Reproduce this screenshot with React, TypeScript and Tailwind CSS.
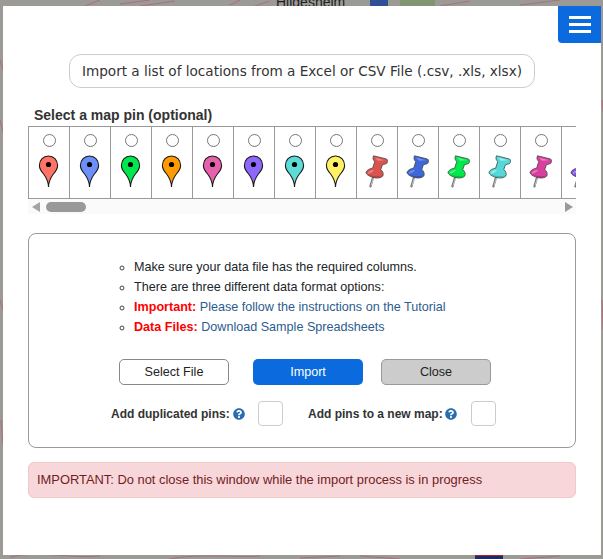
import { FaQuestionCircle } from "react-icons/fa";

const dropPins = ["#ff7466", "#6b90fb", "#00e64d", "#ff9a00", "#e661ac", "#8e67fd", "#5ddbd6", "#fff064"];
const pushPins = [
  ["#d9534f", "#ef8481", "#a33a38"],
  ["#3f67d8", "#6f92ee", "#2c479c"],
  ["#00e64d", "#55f58a", "#00a838"],
  ["#55d8d8", "#9aeeee", "#2ba3a5"],
  ["#d93f9f", "#f079c0", "#a02c75"],
  ["#8055e0", "#a98af0", "#5a3aa5"],
];

const DropPin = ({ color }: { color: string }) => (
  <svg width="21" height="33" viewBox="0 0 21 33" className="mr-[2px] block">
    <path
      d="M10.5 32 C10.3 26 9 23.4 5.6 19 C3 16 1.4 13.8 1.4 10.4 C1.4 5 5.4 1 10.5 1 C15.6 1 19.6 5 19.6 10.4 C19.6 13.8 18 16 15.4 19 C12 23.4 10.7 26 10.5 32 Z"
      fill={color}
      stroke="#1a1a1a"
      strokeWidth="1.1"
    />
    <circle cx="10.5" cy="9.5" r="2.6" fill="#000" />
  </svg>
);

const PushPin = ({ colors }: { colors: string[] }) => (
  <svg width="24" height="33" viewBox="0 0 24 33" className="block">
    <path d="M8 22.5 L5.4 31.4" stroke="#777" strokeWidth="2.2" strokeLinecap="round" />
    <path d="M8.4 23 L6 30.6" stroke="#e4e4e4" strokeWidth="0.7" />
    <path
      d="M8.5 0.8 L21.5 4 C22.8 4.6 22.8 7.6 21.5 8.6 L17.4 9.8 L15.8 14.5 C18 16.5 18.8 19 17.8 21 C15 24 9 23.4 4.5 21 C1.5 19.5 0.6 18 1.2 16.8 C2.2 15 4.5 13.5 7.6 13.2 L9.8 6.5 C8 5.5 7.5 3 8.5 0.8 Z"
      fill={colors[0]}
      stroke="#444"
      strokeWidth="0.8"
    />
    <path d="M10 2.6 L20 5.2 L13 5.8 Z" fill={colors[1]} />
    <path d="M3 17.6 C5 15.6 7 15 9 15 C7.6 17 5.4 18.4 3 18.8 Z" fill={colors[1]} />
    <path d="M2.4 18.8 C7 21.4 12 22.4 17 20.4 C14 23 8 23 2.4 18.8 Z" fill={colors[2]} />
  </svg>
);

const Radio = () => <span className="block h-[13px] w-[13px] rounded-full border border-[#767676] bg-white" />;

const MapBits = () => (
  <svg width="603" height="559" className="absolute inset-0">
    <g fill="none" stroke="#a8707f" strokeWidth="1">
      <path d="M85 6 L100 0 M120 4 L150 0 M140 6 L175 1 M230 5 L240 0 M255 6 L270 1 M440 6 L470 1 M520 5 L560 0" />
      <path d="M10 557 C40 550 70 559 100 556 M170 559 C200 553 240 558 260 556 M300 558 L340 556 M360 556 L400 559 M520 559 L560 556" />
      <path d="M0 60 L3 70 M0 120 L3 132 M0 300 L3 310 M1 420 L3 445 M602 100 L603 112 M602 300 L603 330" />
    </g>
    <rect x="400" y="0" width="35" height="6" fill="#7f9670" />
    <rect x="370" y="0" width="18" height="6" fill="#2f4f96" />
    <rect x="475" y="555" width="28" height="4" fill="#1d2b60" />
    <rect x="475" y="555" width="28" height="1" fill="#b02030" />
  </svg>
);

const App = () => (
  <div className="relative h-[559px] w-[603px] overflow-hidden bg-[#9b9a95] font-['Liberation_Sans',Arial,sans-serif] text-[12.6px] text-[#212529]">
    <MapBits />
    <span className="absolute left-[276px] top-[-8px] text-[14px] text-[#222]">Hildesheim</span>
    <div className="relative ml-[3px] mt-[6px] flex h-[549px] w-[598px] flex-col bg-white px-[25px] pt-[48px]">
      <button className="absolute right-0 top-0 flex h-[37px] w-[43px] flex-col items-center justify-center gap-[4px] rounded-bl-[4px] bg-[#0a6ade]">
        <span className="block h-[3px] w-[22px] bg-white" />
        <span className="block h-[3px] w-[22px] bg-white" />
        <span className="block h-[3px] w-[22px] bg-white" />
      </button>

      <div className="mx-auto flex h-[34px] w-[466px] items-center justify-center rounded-[12px] border border-[#ccc] font-['DejaVu_Sans',Verdana,sans-serif] text-[13.6px] text-[#333]">
        Import a list of locations from a Excel or CSV File (.csv, .xls, xlsx)
      </div>

      <div className="mt-[17px] pl-[6px] text-[14px] font-bold leading-[21px] text-[#333]">Select a map pin (optional)</div>

      <div className="flex h-[73px] overflow-hidden border-y border-[#999]">
        {dropPins.map((c) => (
          <div key={c} className="flex w-[41px] shrink-0 flex-col items-center border-l border-[#999] pt-[7px]">
            <Radio />
            <div className="mt-[8px]">
              <DropPin color={c} />
            </div>
          </div>
        ))}
        {pushPins.map((c, i) => (
          <div key={i} className="flex w-[41px] shrink-0 flex-col items-center border-l border-[#999] pt-[7px]">
            <Radio />
            <div className="mt-[8px]">
              <PushPin colors={c} />
            </div>
          </div>
        ))}
      </div>

      <div className="flex h-[15px] items-center bg-[#fafafa] pl-[4px] pr-[3px]">
        <span className="h-0 w-0 border-y-[5px] border-r-[8px] border-y-transparent border-r-[#a3a3a3]" />
        <span className="ml-[6px] block h-[10px] w-[40px] rounded-full bg-[#999]" />
        <span className="ml-auto h-0 w-0 border-y-[5px] border-l-[8px] border-y-transparent border-l-[#999]" />
      </div>

      <div className="mt-[19px] flex h-[215px] flex-col rounded-[8px] border border-[#999] pt-[23px]">
        <ul className="ml-[89px] list-[circle] pl-[16px] leading-[20px] marker:text-[#444]">
          <li>Make sure your data file has the required columns.</li>
          <li>There are three different data format options:</li>
          <li>
            <b className="text-[#f00]">Important:</b> <span className="text-[#2c5c8f]">Please follow the instructions on the Tutorial</span>
          </li>
          <li>
            <b className="text-[#f00]">Data Files:</b> <span className="text-[#2c5c8f]">Download Sample Spreadsheets</span>
          </li>
        </ul>

        <div className="ml-[90px] mt-[22px] flex h-[26px]">
          <button className="h-[26px] w-[110px] rounded-[5px] border border-[#888] bg-white text-[#222]">Select File</button>
          <button className="ml-[24px] h-[26px] w-[110px] rounded-[5px] bg-[#0a6ade] text-white">Import</button>
          <button className="ml-[18px] h-[26px] w-[110px] rounded-[5px] border border-[#999] bg-[#ccc] text-[#222]">Close</button>
        </div>

        <div className="ml-[82px] mt-[16px] flex h-[25px] items-center whitespace-nowrap text-[12px] font-bold text-[#333]">
          <span className="w-[118px]">Add duplicated pins:</span>
          <FaQuestionCircle className="ml-[4px] shrink-0 text-[12px] text-[#2a6cb0]" />
          <span className="ml-[13px] h-[25px] w-[25px] shrink-0 rounded-[4px] border border-[#ccc] bg-white" />
          <span className="ml-[25px] w-[133px]">Add pins to a new map:</span>
          <FaQuestionCircle className="ml-[4px] shrink-0 text-[12px] text-[#2a6cb0]" />
          <span className="ml-[14px] h-[25px] w-[25px] shrink-0 rounded-[4px] border border-[#ccc] bg-white" />
        </div>
      </div>

      <div className="mt-[14px] flex h-[36px] items-center rounded-[6px] border border-[#f5c6cb] bg-[#f8d7da] pl-[8px] text-[12.9px] text-[#721c24]">
        IMPORTANT: Do not close this window while the import process is in progress
      </div>
    </div>
  </div>
);

export default App;
